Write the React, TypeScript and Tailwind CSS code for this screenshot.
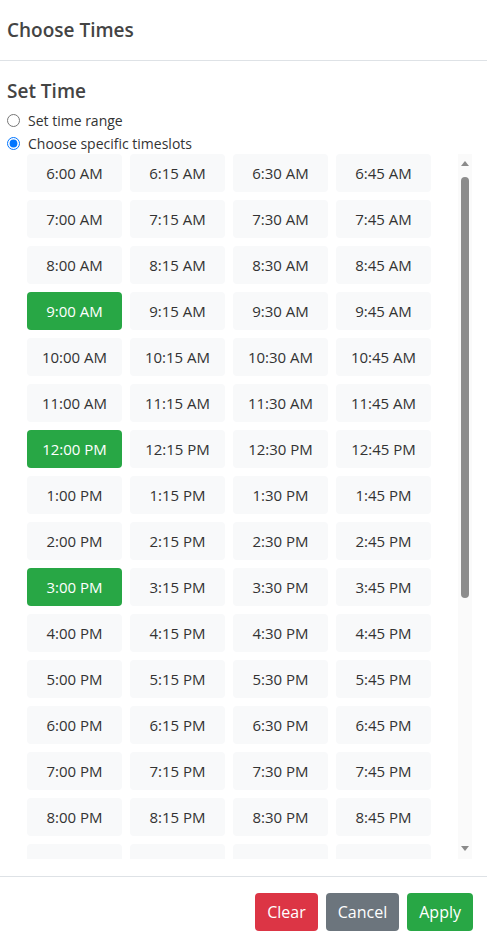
import React, { useState } from "react";

const buildSlots = () => {
  const slots: string[] = [];
  for (let h = 6; h <= 23; h++) {
    for (const m of [0, 15, 30, 45]) {
      const hr = h % 12 === 0 ? 12 : h % 12;
      const ampm = h < 12 ? "AM" : "PM";
      slots.push(`${hr}:${m.toString().padStart(2, "0")} ${ampm}`);
    }
  }
  return slots;
};

const App = () => {
  const [mode, setMode] = useState("specific");
  const [selected, setSelected] = useState<string[]>(["9:00 AM", "12:00 PM", "3:00 PM"]);
  const slots = buildSlots();

  const toggle = (s: string) =>
    setSelected((prev) => (prev.includes(s) ? prev.filter((x) => x !== s) : [...prev, s]));

  return (
    <div className="w-[487px] h-[942px] bg-white flex flex-col text-[#333] font-['Open_Sans',sans-serif]">
      {/* Header */}
      <div className="h-[61px] px-[7px] flex items-center border-b border-[#dee2e6] shrink-0">
        <h4 className="text-[19px] font-semibold text-[#444]">Choose Times</h4>
      </div>

      {/* Body */}
      <div className="pt-[18px] flex-1 flex flex-col">
        <h5 className="px-[7px] h-[24px] leading-[24px] text-[19px] font-semibold text-[#444]">Set Time</h5>
        <div className="mt-[6px] px-[7px] flex flex-col text-[14px]">
          <label className="h-[23px] flex items-center gap-[8px]">
            <input
              type="radio"
              name="mode"
              className="m-0 w-[13px] h-[13px]"
              checked={mode === "range"}
              onChange={() => setMode("range")}
            />
            Set time range
          </label>
          <label className="h-[22px] flex items-center gap-[8px]">
            <input
              type="radio"
              name="mode"
              className="m-0 w-[13px] h-[13px]"
              checked={mode === "specific"}
              onChange={() => setMode("specific")}
            />
            Choose specific timeslots
          </label>
        </div>

        {/* Timeslots */}
        <div className="h-[705px] flex pl-[27px]">
          <div className="w-[404px] overflow-hidden">
            <div className="grid grid-cols-4 gap-[8px]">
              {slots.map((s) => {
                const on = selected.includes(s);
                return (
                  <button
                    key={s}
                    onClick={() => toggle(s)}
                    className={`h-[38px] rounded-[4px] text-[15px] ${
                      on ? "bg-[#28a745] text-white" : "bg-[#f8f9fa] text-[#333]"
                    }`}
                  >
                    {s}
                  </button>
                );
              })}
            </div>
          </div>
          <div className="ml-[27px] w-[14px] bg-[#fafafa] flex flex-col items-center">
            <svg width="8" height="5" viewBox="0 0 8 5" className="mt-[7px]">
              <path d="M4 0 L8 5 L0 5 Z" fill="#8a8a8a" />
            </svg>
            <div className="mt-[11px] w-[8px] h-[421px] rounded-full bg-[#8c8c8c]" />
            <div className="flex-1" />
            <svg width="8" height="5" viewBox="0 0 8 5" className="mb-[8px]">
              <path d="M0 0 L8 0 L4 5 Z" fill="#8a8a8a" />
            </svg>
          </div>
        </div>
      </div>

      {/* Footer */}
      <div className="mt-[17px] border-t border-[#dee2e6] pt-[16px] pb-[11px] pr-[14px] flex justify-end gap-[8px] shrink-0">
        <button className="h-[38px] px-[12px] rounded-[4px] bg-[#dc3545] text-white text-[16px]">Clear</button>
        <button className="h-[38px] px-[12px] rounded-[4px] bg-[#6c757d] text-white text-[16px]">Cancel</button>
        <button className="h-[38px] px-[12px] rounded-[4px] bg-[#28a745] text-white text-[16px]">Apply</button>
      </div>
    </div>
  );
};

export default App;
